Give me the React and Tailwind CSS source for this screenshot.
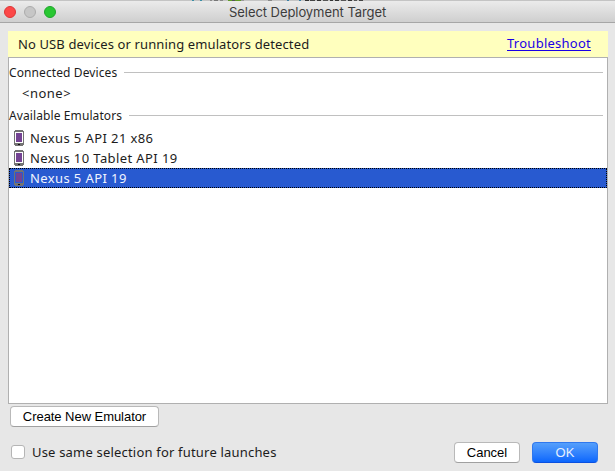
const LUCIDA = "font-['Noto_Sans','Open_Sans',sans-serif]";

// The gap between the bezel and the screen is transparent, so the row colour shows through.
function PhoneIcon() {
  return (
    <svg width="10" height="16" viewBox="0 0 10 16" shapeRendering="crispEdges" className="block shrink-0">
      <path fill="#737373" fillRule="evenodd" d="M1 0h8v1h1v14h-1v1H1v-1H0V1h1zM1 2v11h8V2z" />
      <rect x="2" y="3" width="6" height="9" fill="#744393" />
      <rect x="4" y="14" width="2" height="1" fill="#111111" />
    </svg>
  );
}

function Section({ title }) {
  return (
    <div className="flex h-4 items-start gap-[7px] pr-1">
      <span className="text-[12px] leading-4 tracking-[0.1px]">{title}</span>
      <span className="mt-[7px] h-px flex-1 bg-[#c0c0c0]" />
    </div>
  );
}

const BACKGROUND_MARKS = [
  [192, 2, "#3b8ea5"], [200, 2, "#3b8ea5"], [210, 2, "#8a8a8a"], [214, 4, "#777777"], [220, 3, "#888888"],
  [228, 4, "#5f9a25"], [232, 3, "#555555"], [235, 6, "#5f9a25"], [241, 3, "#999999"], [268, 4, "#888888"],
  [287, 2, "#3b7fa5"], [299, 2, "#3b7fa5"], [305, 4, "#333333"], [310, 5, "#444444"], [317, 4, "#333333"],
  [323, 5, "#555555"], [330, 3, "#333333"], [335, 4, "#333333"], [341, 5, "#555555"], [348, 4, "#333333"],
  [354, 3, "#555555"], [359, 4, "#444444"],
];

export default function App() {
  return (
    <div className={`flex h-[471px] w-[615px] flex-col overflow-hidden bg-[#e7e7e7] text-[#1c1c1c] ${LUCIDA} text-[13px]`}>
      <svg width="615" height="1" viewBox="0 0 615 1" className="block shrink-0" shapeRendering="crispEdges">
        <rect width="615" height="1" fill="#c4c4c4" />
        {BACKGROUND_MARKS.map(([x, w, fill]) => <rect key={x} x={x} width={w} height="1" fill={fill} />)}
      </svg>
      <header className="flex h-[22px] shrink-0 items-center border-b border-[#a6a6a6] bg-linear-to-b from-[#ebebeb] to-[#cfcfcf] pl-1">
        <div className="flex w-[225px] gap-2">
          <span className="size-3 rounded-full border border-[#dd3636] bg-[#fc4848]" />
          <span className="size-3 rounded-full border border-[#acacac] bg-[#c6c6c6]" />
          <span className="size-3 rounded-full border border-[#1fa52b] bg-[#29c732]" />
        </div>
        <h1 className="pt-px whitespace-nowrap font-['Inter','Liberation_Sans',sans-serif] text-[13px] leading-5 tracking-[-0.06px] text-[#3c3c3c]">Select Deployment Target</h1>
      </header>
      <main className="flex flex-1 flex-col px-2 pt-2 pr-[7px]">
        <div className="flex h-[26px] shrink-0 items-start justify-between bg-[#ffffbe] pr-[17px] pl-2.5">
          <span className="pt-[3px] leading-5 whitespace-nowrap tracking-[0.12px]">No USB devices or running emulators detected</span>
          <a className="mt-0.5 h-[18px] border-b border-[#1a00e6] leading-5 tracking-[0.25px] text-[#1a00e6]">Troubleshoot</a>
        </div>
        <section className="h-[347px] shrink-0 border border-[#b0b0b0] bg-white pt-[7px]">
          <Section title="Connected Devices" />
          <p className="h-[27px] pt-0.5 pl-[13px] leading-5 tracking-[0.5px]">&lt;none&gt;</p>
          <Section title="Available Emulators" />
          <ul className="pt-1 tracking-[0.4px]">
            <li className="flex h-5 items-center gap-1.5 pl-[5px]"><PhoneIcon /><span className="pt-0.5">Nexus 5 API 21 x86</span></li>
            <li className="flex h-5 items-center gap-1.5 pl-[5px]"><PhoneIcon /><span className="pt-0.5">Nexus 10 Tablet API 19</span></li>
            <li className="flex h-5 items-center gap-1.5 border border-dotted border-black bg-[#285ad0] pl-1 text-[#f0f4ff]"><PhoneIcon /><span className="pt-0.5">Nexus 5 API 19</span></li>
          </ul>
        </section>
        <button className="mt-0.5 ml-0.5 h-[21px] w-[149px] shrink-0 rounded-[4px] border border-[#b9b9b9] border-b-[#a0a0a0] bg-white pt-px font-['Liberation_Sans',sans-serif] text-[13px] leading-[18px] tracking-[-0.05px] text-black">Create New Emulator</button>
        <footer className="mt-3.5 flex h-[22px] items-center">
          <label className="flex flex-1 items-center gap-[7px] pl-[3px]">
            <span className="size-3.5 rounded-[3px] border border-[#b5b5b5] bg-white" />
            <span className="pt-0.5 whitespace-nowrap tracking-[0.19px]">Use same selection for future launches</span>
          </label>
          <button className="mr-3 h-[21px] w-[66px] rounded-[4px] border border-[#b9b9b9] border-b-[#a0a0a0] bg-white font-['Liberation_Sans',sans-serif] text-[13px] leading-[19px] text-black">Cancel</button>
          <button className="mr-2.5 h-[21px] w-[66px] rounded-[4px] border border-[#2f78ee] border-b-[#0a50e0] bg-linear-to-b from-[#559ffb] to-[#0a66fd] font-['Liberation_Sans',sans-serif] text-[13px] leading-[19px] text-[#e4efff]">OK</button>
        </footer>
      </main>
    </div>
  );
}
